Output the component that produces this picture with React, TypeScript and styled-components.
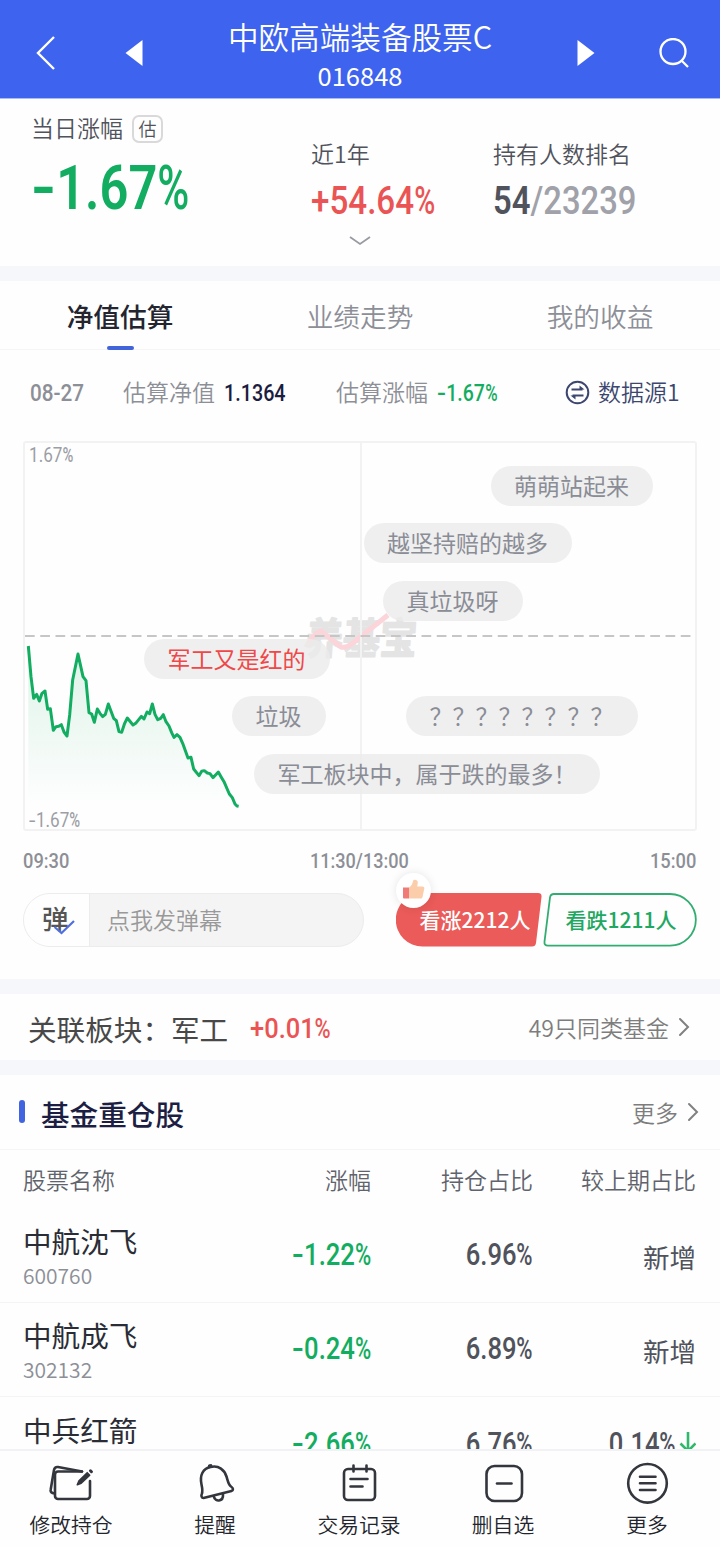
import React from 'react';
import styled, { createGlobalStyle } from 'styled-components';

const CJK = '"Noto Sans CJK SC", "Noto Sans", sans-serif';
const GREEN = '#12ad60';
const RED = '#ea5454';

const GlobalStyle = createGlobalStyle`
  * { box-sizing: border-box; }
  body { margin: 0; background: #fefefe; font-family: ${CJK}; }
`;

const Screen = styled.div`
  display: flex;
  flex-direction: column;
  width: 720px;
  height: 1547px;
  overflow: hidden;
  background: #fefefe;
`;

const Content = styled.main`
  flex: 1;
  min-height: 0;
  overflow: hidden;
`;

/* ---------- condensed figures ---------- */

const Figure = styled.span<{ $size: number; $color: string; $weight?: number; $scale?: number; $right?: boolean }>`
  display: inline-block;
  font-family: Roboto, sans-serif;
  font-size: ${(p) => p.$size}px;
  font-weight: ${(p) => p.$weight ?? 500};
  line-height: 1;
  white-space: nowrap;
  color: ${(p) => p.$color};
  transform: scaleX(${(p) => p.$scale ?? 0.84});
  transform-origin: ${(p) => (p.$right ? 'right' : 'left')} center;
`;

const Minus = styled.span`
  display: inline-block;
  transform: scaleX(1.35);
  transform-origin: left center;
  margin-right: 0.13em;
`;

const Percent = styled.span`
  display: inline-block;
  font-weight: 500;
  transform: scaleX(0.86);
  transform-origin: left center;
  margin-right: -0.1em;
`;

const Muted = styled.span`
  color: #a0a1a9;
  font-weight: 500;
`;

type NumProps = { value: string; size: number; color: string; weight?: number; scale?: number; right?: boolean };

function Num({ value, size, color, weight, scale, right }: NumProps) {
  const minus = value.startsWith('-');
  const percent = value.endsWith('%');
  const body = value.slice(minus ? 1 : 0, percent ? -1 : undefined);
  return (
    <Figure $size={size} $color={color} $weight={weight} $scale={scale} $right={right}>
      {minus && <Minus>-</Minus>}
      {body}
      {percent && <Percent>%</Percent>}
    </Figure>
  );
}

/* ---------- header ---------- */

const Header = styled.header`
  display: grid;
  grid-template-columns: 92px 84px 1fr 84px 92px;
  align-items: center;
  height: 99px;
  background: #3e63ee;
  color: #fff;
  border-bottom: 1px solid #a9bbf7;
`;

const HeaderButton = styled.div`
  display: flex;
  justify-content: center;
  padding-top: 8px;
`;

const TitleBlock = styled.div`
  text-align: center;
  padding-top: 11px;
`;

const Title = styled.div`
  font-size: 30.6px;
  line-height: 40px;
  font-weight: 350;
`;

const Code = styled.div`
  font-size: 25.5px;
  line-height: 38px;
`;

/* ---------- summary ---------- */

const Summary = styled.section`
  position: relative;
  display: grid;
  grid-template-columns: 280px 182px 1fr;
  height: 167px;
  padding-left: 31px;
`;

const Stat = styled.div<{ $top: number; $gap: number }>`
  display: flex;
  flex-direction: column;
  align-items: flex-start;
  gap: ${(p) => p.$gap}px;
  padding-top: ${(p) => p.$top}px;
`;

const StatLabel = styled.div`
  display: flex;
  align-items: center;
  gap: 9px;
  font-size: 23px;
  line-height: 30px;
  font-weight: 350;
  color: #50535c;
`;

const Tag = styled.span`
  display: flex;
  justify-content: center;
  width: 31px;
  height: 28px;
  margin-top: 4px;
  border: 2px solid #d9d9d9;
  border-radius: 7px;
  font-size: 18px;
  line-height: 22px;
`;

const Expand = styled.svg`
  position: absolute;
  left: 348px;
  bottom: 18px;
`;

const Gap = styled.div`
  height: 15px;
  background: #f5f7fb;
`;

/* ---------- tabs ---------- */

const Tabs = styled.nav`
  display: grid;
  grid-template-columns: repeat(3, 1fr);
  height: 69px;
  border-bottom: 1px solid #f5f5f5;
`;

const Tab = styled.div<{ $active?: boolean }>`
  display: flex;
  flex-direction: column;
  align-items: center;
  justify-content: space-between;
  height: 69px;
  padding-top: 16px;
  font-size: 26.7px;
  line-height: 38px;
  font-weight: ${(p) => (p.$active ? 500 : 350)};
  color: ${(p) => (p.$active ? '#23252f' : '#8d8f97')};
  &::after {
    content: '';
    width: 27px;
    height: 4px;
    border-radius: 2px;
    background: ${(p) => (p.$active ? '#4164da' : 'transparent')};
  }
`;

/* ---------- estimate line ---------- */

const InfoRow = styled.div`
  display: grid;
  grid-template-columns: 93px 213px 229px 1fr;
  align-items: center;
  height: 91px;
  padding: 0 0 4px 30px;
  font-size: 23px;
  font-weight: 350;
  line-height: 32px;
  color: #8d8f97;
`;

const InfoItem = styled.div`
  display: flex;
  align-items: center;
  gap: 9px;
`;

const InfoLabel = styled.span`
  margin-bottom: 5px;
`;

const Source = styled(InfoItem)`
  gap: 8px;
  color: #3c466f;
  svg { margin-bottom: 3px; }
`;

/* ---------- chart ---------- */

const Chart = styled.div`
  position: relative;
  width: 674px;
  height: 390px;
  margin: 0 0 0 23px;
`;

const Plot = styled.svg`
  display: block;
`;

const AxisLabel = styled.div<{ $bottom?: boolean }>`
  position: absolute;
  left: 6px;
  display: flex;
  ${(p) => (p.$bottom ? 'bottom: 1px;' : 'top: 4px;')}
`;

const Bullet = styled.div<{ $x: number; $y: number; $w: number; $hot?: boolean }>`
  position: absolute;
  left: ${(p) => p.$x}px;
  top: ${(p) => p.$y}px;
  width: ${(p) => p.$w}px;
  height: 40px;
  padding-left: 23.5px;
  border-radius: 20px;
  background: rgba(236, 236, 236, 0.82);
  font-size: 23px;
  line-height: 38px;
  white-space: nowrap;
  color: ${(p) => (p.$hot ? '#f04848' : '#8a8c96')};
`;

const Times = styled.div`
  display: grid;
  grid-template-columns: 1fr 1fr 1fr;
  align-items: center;
  height: 62px;
  padding: 0 24px 2px 23px;
  > :nth-child(2) { justify-self: center; transform-origin: center; }
  > :nth-child(3) { justify-self: end; }
`;

/* ---------- vote bar ---------- */

const ActionRow = styled.div`
  display: flex;
  height: 86px;
  padding-left: 23px;
`;

const BulletInput = styled.div`
  display: flex;
  width: 341px;
  height: 54px;
  border: 1px solid #ececec;
  border-radius: 27px;
  overflow: hidden;
  background: #f4f4f4;
`;

const BulletToggle = styled.div`
  position: relative;
  width: 66px;
  padding-left: 18px;
  background: #fefefe;
  border-right: 1px solid #ececec;
  font-size: 26.5px;
  font-weight: 500;
  line-height: 48px;
  color: #555;
`;

const ToggleCheck = styled.svg`
  position: absolute;
  left: 29px;
  top: 25px;
`;

const Placeholder = styled.div`
  padding-left: 17px;
  font-size: 23px;
  font-weight: 350;
  line-height: 50px;
  color: #999;
`;

const Vote = styled.div<{ $w: number; $ml: number; $pad: number; $color: string }>`
  position: relative;
  width: ${(p) => p.$w}px;
  height: 54px;
  margin-left: ${(p) => p.$ml}px;
  padding-left: ${(p) => p.$pad}px;
  font-size: 21px;
  font-weight: 500;
  line-height: 53px;
  white-space: nowrap;
  color: ${(p) => p.$color};
`;

const VoteShape = styled.svg`
  position: absolute;
  inset: 0;
`;

const VoteText = styled.span`
  position: relative;
`;

const Thumb = styled.div`
  position: absolute;
  left: 0;
  top: -20px;
  width: 35px;
  height: 35px;
  border-radius: 50%;
  background: #fff;
  box-shadow: 0 0 10px rgba(0, 0, 0, 0.1);
`;

/* ---------- sector ---------- */

const Between = styled.section<{ $h: number }>`
  display: flex;
  align-items: center;
  justify-content: space-between;
  height: ${(p) => p.$h}px;
`;

const Sector = styled.div`
  display: flex;
  align-items: center;
  gap: 22px;
  padding: 3px 0 0 28px;
  font-size: 28.6px;
  line-height: 40px;
  color: #484848;
`;

const More = styled.div<{ $right: number }>`
  display: flex;
  align-items: center;
  gap: 9px;
  padding: 0 ${(p) => p.$right}px 1px 0;
  font-size: 23px;
  font-weight: 350;
  line-height: 34px;
  color: #7d7d7d;
`;

const SectionTitle = styled.h2`
  display: flex;
  align-items: center;
  gap: 16px;
  margin: 0;
  padding: 4px 0 0 19px;
  font-size: 28.6px;
  font-weight: 500;
  line-height: 42px;
  color: #1d1e44;
  &::before {
    content: '';
    width: 6px;
    height: 23px;
    margin-top: -5px;
    border-radius: 3px;
    background: #4164e0;
  }
`;

/* ---------- holdings ---------- */

const Row = styled.div<{ $h: number }>`
  display: grid;
  grid-template-columns: 185px 163px 162px 163px;
  height: ${(p) => p.$h}px;
  padding-left: 23px;
`;

const HeadRow = styled(Row)`
  border-top: 1px solid #f5f5f5;
  padding-top: 13px;
  font-size: 23px;
  font-weight: 350;
  line-height: 32px;
  color: #60636c;
  > :not(:first-child) { text-align: right; }
`;

const StockRow = styled(Row)`
  border-bottom: 1px solid #f3f4f6;
`;

const StockName = styled.div`
  padding-top: 12.5px;
  font-size: 28.6px;
  line-height: 40px;
  color: #2b2d36;
`;

const StockCode = styled.div`
  font-size: 21px;
  font-weight: 350;
  line-height: 28px;
  color: #8d8f97;
`;

const Cell = styled.div<{ $top?: number }>`
  display: flex;
  justify-content: flex-end;
  align-items: flex-start;
  padding-top: ${(p) => p.$top ?? 31.5}px;
  font-size: 26.5px;
  line-height: 36px;
  color: #50525c;
`;

const DownArrow = styled.svg`
  margin-top: -1px;
`;

/* ---------- bottom bar ---------- */

const BottomBar = styled.footer`
  display: grid;
  grid-template-columns: repeat(5, 144px);
  height: 98px;
  margin-left: -1px;
  border-top: 2px solid #f0f2f6;
  background: #fefefe;
`;

const BottomItem = styled.div`
  display: flex;
  flex-direction: column;
  align-items: center;
  padding-top: 11px;
  font-size: 20.8px;
  font-weight: 350;
  line-height: 30px;
  color: #23252c;
  svg { display: block; margin-bottom: 5px; }
`;

/* ---------- data ---------- */

const LINE =
  '85,138 93,230 101,295 110,283 118,303 126,280 135,273 143,328 151,326 160,391 168,380 176,379 184,374 192,396 201,408 209,345 218,240 234,162 249,230 258,242 267,338 275,342 283,367 292,327 300,340 308,350 316,343 325,312 341,355 349,362 357,395 365,397 374,370 382,354 399,375 407,370 424,349 432,357 441,336 449,341 457,312 465,343 473,359 482,355 490,344 498,365 507,378 515,398 522,412 531,404 540,412 548,430 564,474 573,472 581,507 597,527 605,514 613,512 622,519 630,521 639,533 655,516 663,530 672,545 688,582 697,593 705,612 711,618 716,619';

const BULLETS = [
  { text: '萌萌站起来', x: 467.5, y: 25, w: 162 },
  { text: '越坚持赔的越多', x: 340.5, y: 82, w: 208 },
  { text: '真垃圾呀', x: 360, y: 140, w: 140 },
  { text: '军工又是红的', x: 121, y: 198, w: 186, hot: true },
  { text: '垃圾', x: 209, y: 255, w: 94 },
  { text: '？？？？？？？？', x: 383, y: 255, w: 232 },
  { text: '军工板块中，属于跌的最多！', x: 231, y: 313, w: 346 },
];

const STOCKS = [
  { name: '中航沈飞', code: '600760', change: '-1.22%', ratio: '6.96%', diff: '新增' },
  { name: '中航成飞', code: '302132', change: '-0.24%', ratio: '6.89%', diff: '新增' },
  { name: '中兵红箭', change: '-2.66%', ratio: '6.76%', diff: '0.14%', down: true },
];

const stroke = { fill: 'none', stroke: '#34363e', strokeWidth: 2.6, strokeLinecap: 'round', strokeLinejoin: 'round' } as const;

const Chevron = () => (
  <svg width="12" height="20" viewBox="0 0 12 20">
    <path d="M2 2l8 8-8 8" fill="none" stroke="#808080" strokeWidth="2" strokeLinecap="round" />
  </svg>
);

const EditIcon = () => (
  <svg width="44" height="42" viewBox="0 0 44 42" {...stroke}>
    <path d="M41 19v15a3 3 0 0 1-3 3H9a3 3 0 0 1-3-3V12.500a3 3 0 0 1 3-3h24" />
    <path d="M5.500 31.500c-3-.5-4.300-1.500-3.800-4L5 8c.5-2.500 1.500-3.300 4-3l24 4.500" />
    <path d="M28.300 22.700l1.700-4 8.200-8 2.500 2.500-8.500 8z" fill="#34363e" strokeWidth="1.600" />
    <path d="M41.500 8.800l.9.900" strokeWidth="3" />
  </svg>
);

const BellIcon = () => (
  <svg width="44" height="42" viewBox="0 0 44 42" {...stroke}>
    <path d="M10.500 36C8.500 36 8 33.500 8.800 32C9.800 29.500 9.500 27 8.500 22.500C6.500 13 10 6.500 17.500 5C26 3 31.500 8 33.500 14.500C35 19.500 35.500 23 38 24.500C40.500 26 40.500 28.500 38.500 29Z" />
    <path d="M16.800 4.200l.8-.2" strokeWidth="3.800" />
    <path d="M21 35c1 5 9.500 5 9-2.500" />
  </svg>
);

const RecordIcon = () => (
  <svg width="44" height="42" viewBox="0 0 44 42" {...stroke}>
    <rect x="7" y="7" width="31" height="31" rx="4" />
    <path d="M16.500 3.500v6M29.500 3.500v6M13.500 17h17M13.500 24.500h12" />
  </svg>
);

const RemoveIcon = () => (
  <svg width="44" height="42" viewBox="0 0 44 42" {...stroke}>
    <rect x="5.500" y="4" width="35.500" height="35" rx="8" />
    <path d="M16 21.500h14.500" />
  </svg>
);

const MenuIcon = () => (
  <svg width="44" height="42" viewBox="0 0 44 42" {...stroke}>
    <circle cx="22.500" cy="21.300" r="19.300" />
    <path d="M15 14.800h15.500M15 21.300h15.500M15 28h15.500" />
  </svg>
);

const ACTIONS = [
  { label: '修改持仓', Icon: EditIcon },
  { label: '提醒', Icon: BellIcon },
  { label: '交易记录', Icon: RecordIcon },
  { label: '删自选', Icon: RemoveIcon },
  { label: '更多', Icon: MenuIcon },
];

export default function App() {
  return (
    <Screen>
      <GlobalStyle />
      <Content>
        <Header>
          <HeaderButton>
            <svg width="22" height="36" viewBox="0 0 22 36">
              <path d="M19 2L3 18l16 16" fill="none" stroke="#fff" strokeWidth="2.400" />
            </svg>
          </HeaderButton>
          <HeaderButton>
            <svg width="18" height="26" viewBox="0 0 18 26">
              <path d="M17.500 0v26L.5 13z" fill="#fff" />
            </svg>
          </HeaderButton>
          <TitleBlock>
            <Title>中欧高端装备股票C</Title>
            <Code>016848</Code>
          </TitleBlock>
          <HeaderButton>
            <svg width="18" height="26" viewBox="0 0 18 26">
              <path d="M.5 0v26l17-13z" fill="#fff" />
            </svg>
          </HeaderButton>
          <HeaderButton>
            <svg width="30" height="30" viewBox="0 0 30 30" fill="none" stroke="#fff" strokeWidth="2.300">
              <circle cx="14" cy="13.500" r="12.500" />
              <path d="M22.500 22.500l6.500 6.500" />
            </svg>
          </HeaderButton>
        </Header>

        <Summary>
          <Stat $top={12} $gap={15}>
            <StatLabel>
              当日涨幅<Tag>估</Tag>
            </StatLabel>
            <Num value="-1.67%" size={61} color={GREEN} weight={650} scale={0.83} />
          </Stat>
          <Stat $top={39} $gap={13}>
            <StatLabel>近1年</StatLabel>
            <Num value="+54.64%" size={39.5} color={RED} weight={550} />
          </Stat>
          <Stat $top={39} $gap={13}>
            <StatLabel>持有人数排名</StatLabel>
            <Figure $size={39.5} $weight={600} $scale={0.83} $color="#50525c">
              54<Muted>/23239</Muted>
            </Figure>
          </Stat>
          <Expand width="24" height="13" viewBox="0 0 24 13">
            <path d="M2 2l10 7 10-7" fill="none" stroke="#999ba2" strokeWidth="1.800" />
          </Expand>
        </Summary>
        <Gap />

        <Tabs>
          <Tab $active>净值估算</Tab>
          <Tab>业绩走势</Tab>
          <Tab>我的收益</Tab>
        </Tabs>

        <InfoRow>
          <Num value="08-27" size={23.5} color="#8d8f97" scale={0.88} />
          <InfoItem>
            <InfoLabel>估算净值</InfoLabel>
            <Num value="1.1364" size={23.5} color="#1b1c40" />
          </InfoItem>
          <InfoItem>
            <InfoLabel>估算涨幅</InfoLabel>
            <Num value="-1.67%" size={23.5} color={GREEN} scale={0.83} />
          </InfoItem>
          <Source>
            <svg width="25" height="25" viewBox="0 0 25 25" fill="none" stroke="#3c466f" strokeWidth="2">
              <circle cx="12.500" cy="12.500" r="10.800" />
              <path d="M6.500 9.500h11M7.500 15.500h11" />
              <path d="M14.500 5.500l5 4h-5zM10.500 19.500l-5-4h5z" fill="#3c466f" stroke="none" />
            </svg>
            <InfoLabel>数据源1</InfoLabel>
          </Source>
        </InfoRow>

        <Chart>
          <Plot width="674" height="390" viewBox="0 0 674 390">
            <defs>
              <linearGradient id="area" x1="0" y1="0" x2="0" y2="1">
                <stop offset="0" stopColor={GREEN} stopOpacity="0.14" />
                <stop offset="1" stopColor={GREEN} stopOpacity="0" />
              </linearGradient>
            </defs>
            <g transform="translate(282 213) skewX(-4) scale(1 1.15)">
              <text
                fontFamily={CJK}
                fontSize="37"
                fontWeight="700"
                fill="#e4e4e4"
                stroke="#e4e4e4"
                strokeWidth="1.400"
                strokeLinejoin="round"
              >
                养基宝
              </text>
            </g>
            <path d="M283 206q8-14 15-16l20 16q7 1 13-5l34-27" fill="none" stroke="#fbd5da" strokeWidth="5" strokeLinejoin="round" />
            <g transform="scale(0.33333) translate(-69 477)">
              <polygon points={`85,600 ${LINE} 716,619 85,619`} fill="url(#area)" />
              <polyline points={LINE} fill="none" stroke={GREEN} strokeWidth="9" strokeLinejoin="round" />
            </g>
            <rect x="1" y="1" width="672" height="388" rx="2" fill="none" stroke="#f2f2f2" strokeWidth="2" />
            <path d="M338 1v388" stroke="#f2f2f2" strokeWidth="2" />
            <path d="M2 195h670" stroke="#c6c6c6" strokeWidth="2" strokeDasharray="9.700 5.550" />
          </Plot>
          <AxisLabel>
            <Num value="1.67%" size={20.4} color="#9c9ea5" weight={450} />
          </AxisLabel>
          <AxisLabel $bottom>
            <Num value="-1.67%" size={20.4} color="#9c9ea5" weight={450} />
          </AxisLabel>
          {BULLETS.map((b) => (
            <Bullet key={b.text} $x={b.x} $y={b.y} $w={b.w} $hot={b.hot}>
              {b.text}
            </Bullet>
          ))}
        </Chart>

        <Times>
          <Num value="09:30" size={21} color="#8d8f97" scale={0.87} />
          <Num value="11:30/13:00" size={21} color="#8d8f97" scale={0.86} />
          <Num value="15:00" size={21} color="#8d8f97" scale={0.87} right />
        </Times>

        <ActionRow>
          <BulletInput>
            <BulletToggle>
              弹
              <ToggleCheck width="22" height="17" viewBox="0 0 22 17">
                <path d="M1.500 8l7 6L21 2" fill="none" stroke="#4f6fe0" strokeWidth="2.200" />
              </ToggleCheck>
            </BulletToggle>
            <Placeholder>点我发弹幕</Placeholder>
          </BulletInput>
          <Vote $w={146} $ml={32} $pad={23.5} $color="#fff">
            <VoteShape width="146" height="54" viewBox="0 0 146 54">
              <path d="M26.500 0H142q4 0 3.500 4l-5.500 46q-.5 3.500-4 3.500H26.500a26.700 26.700 0 0 1 0-53.500z" fill="#ea5b59" />
            </VoteShape>
            <VoteText>看涨2212人</VoteText>
            <Thumb>
              <svg width="35" height="35" viewBox="0 0 35 35">
                <path d="M7 14.500h6v11H8a1 1 0 0 1-1-1z" fill="#f07a78" />
                <path d="M13 14.500c3-2 3.500-4 4-6.500.5-2 5-1.500 4.800 1.500l-.6 4h5.300c1.500 0 2 1 1.800 2l-1.800 8.500c-.3 1-1 1.500-2 1.500H13z" fill="#fccdab" />
              </svg>
            </Thumb>
          </Vote>
          <Vote $w={154} $ml={1} $pad={22.5} $color="#1fa862">
            <VoteShape width="154" height="54" viewBox="0 0 154 54">
              <path d="M11 1h116a25.800 25.800 0 0 1 0 51.700H5q-4 0-3.500-4L7 4.500Q7.500 1 11 1z" fill="#fefefe" stroke="#32ad71" strokeWidth="1.800" />
            </VoteShape>
            <VoteText>看跌1211人</VoteText>
          </Vote>
        </ActionRow>
        <Gap />

        <Between $h={66}>
          <Sector>
            关联板块：军工
            <Num value="+0.01%" size={28} color={RED} weight={480} scale={0.91} />
          </Sector>
          <More $right={30}>
            49只同类基金
            <Chevron />
          </More>
        </Between>
        <Gap />

        <Between $h={74}>
          <SectionTitle>基金重仓股</SectionTitle>
          <More $right={21}>
            更多
            <Chevron />
          </More>
        </Between>

        <HeadRow $h={59}>
          <div>股票名称</div>
          <div>涨幅</div>
          <div>持仓占比</div>
          <div>较上期占比</div>
        </HeadRow>
        {STOCKS.map((s) => (
          <StockRow key={s.name} $h={94.5}>
            <div>
              <StockName>{s.name}</StockName>
              {s.code && <StockCode>{s.code}</StockCode>}
            </div>
            <Cell>
              <Num value={s.change} size={30.5} color={GREEN} right />
            </Cell>
            <Cell>
              <Num value={s.ratio} size={30.5} color="#50525c" right />
            </Cell>
            {s.down ? (
              <Cell>
                <Num value={s.diff} size={30.5} color="#50525c" right />
                <DownArrow width="20" height="30" viewBox="0 0 20 30">
                  <path d="M12 4v18M4.500 15.500l7.500 7.500 7.500-7.500" fill="none" stroke="#2fb96a" strokeWidth="2.600" />
                </DownArrow>
              </Cell>
            ) : (
              <Cell $top={30.5}>{s.diff}</Cell>
            )}
          </StockRow>
        ))}
      </Content>

      <BottomBar>
        {ACTIONS.map(({ label, Icon }) => (
          <BottomItem key={label}>
            <Icon />
            {label}
          </BottomItem>
        ))}
      </BottomBar>
    </Screen>
  );
}
